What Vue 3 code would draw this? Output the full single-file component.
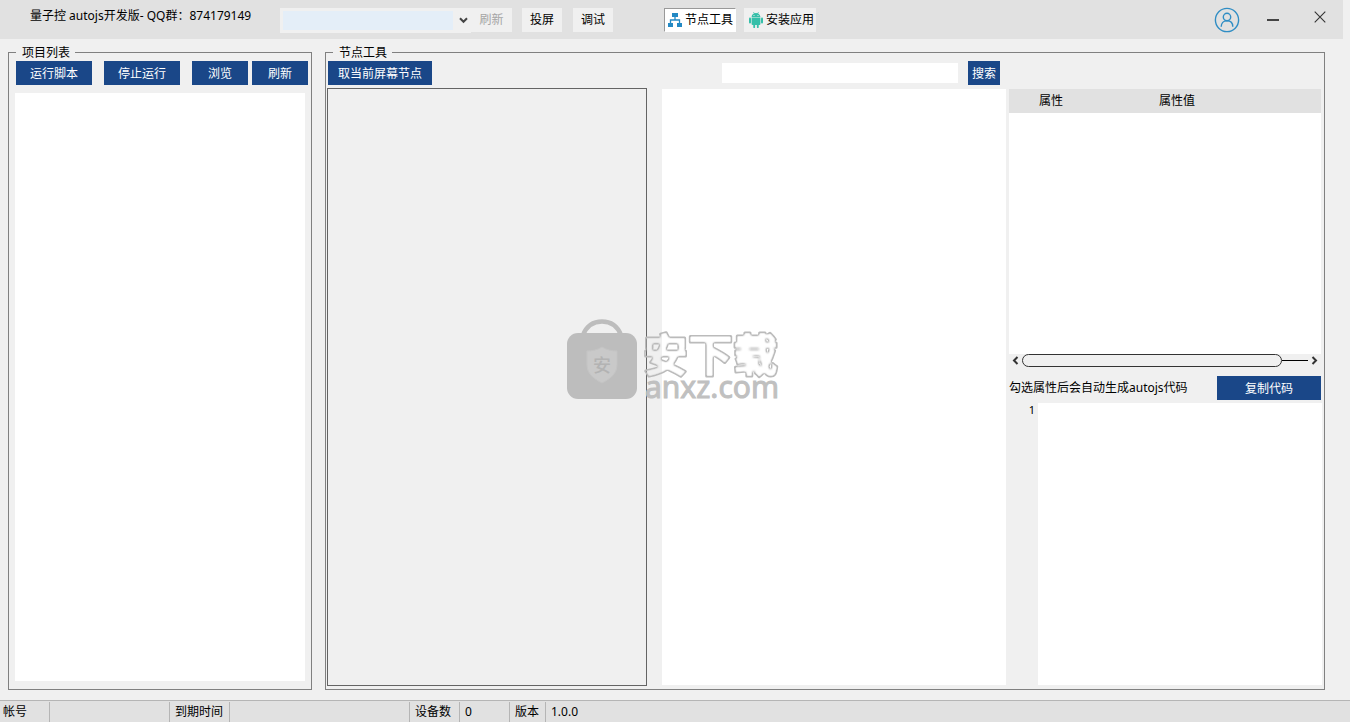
<script setup>
import { ref } from 'vue'

const device = ref('')
const keyword = ref('')
const code = ref('')
const projectActions = [
  { label: '运行脚本', size: 'wide' },
  { label: '停止运行', size: 'wide' },
  { label: '浏览', size: 'small' },
  { label: '刷新', size: 'small' },
]
const status = [
  { text: '帐号', cell: 'account-label' },
  { text: '', cell: 'account' },
  { text: '到期时间', cell: 'expiry-label' },
  { text: '', cell: 'expiry' },
  { text: '设备数', cell: 'devices-label' },
  { text: '0', cell: 'devices' },
  { text: '版本', cell: 'version-label' },
  { text: '1.0.0', cell: 'version' },
]
</script>

<template>
  <div class="window">
    <header class="titlebar">
      <h1 class="title">量子控 autojs开发版- QQ群：874179149</h1>
      <div class="device">
        <select v-model="device" class="device-select" aria-label="设备">
          <option value=""></option>
        </select>
        <svg class="chevron" width="9" height="7" viewBox="0 0 9 7"><path d="M1 1.2L4.5 4.8L8 1.2" fill="none" stroke="#444" stroke-width="2" /></svg>
        <button class="tool refresh" disabled>刷新</button>
      </div>
      <button class="tool cast">投屏</button>
      <button class="tool debug">调试</button>
      <button class="tool tab active">
        <svg width="16" height="16" viewBox="0 0 16 16">
          <path d="M5 1h6v4H5zM1 11h5v4H1zM10 11h5v4h-5z" fill="#2389c4" />
          <path d="M8 5v3M3.5 11V8h9v3" fill="none" stroke="#2389c4" stroke-width="1.3" />
        </svg>
        <span>节点工具</span>
      </button>
      <button class="tool tab">
        <svg width="16" height="16" viewBox="0 0 16 16">
          <g fill="#35bfa9">
            <path d="M3.6 5C3.8 3 5 2 6 1.6L5.2.4l.5-.3.9 1.2a5 5 0 0 1 2.8 0l.9-1.2.5.3L10 1.6c1.2.5 2.2 1.6 2.4 3.4z" />
            <path d="M3.6 5.6h8.8V12a1 1 0 0 1-1 1h-.7v2.2a.9.9 0 0 1-1.8 0V13H7.1v2.2a.9.9 0 0 1-1.8 0V13h-.7a1 1 0 0 1-1-1z" />
            <rect x="1" y="5.5" width="2" height="6" rx="1" />
            <rect x="13" y="5.5" width="2" height="6" rx="1" />
          </g>
          <circle cx="6" cy="3.5" r=".6" fill="#f0f0f0" />
          <circle cx="10" cy="3.5" r=".6" fill="#f0f0f0" />
        </svg>
        <span>安装应用</span>
      </button>
      <div class="controls">
        <button class="control user" aria-label="用户">
          <svg width="26" height="26" viewBox="0 0 26 26" fill="none" stroke="#2f8dc4" stroke-width="1.4">
            <circle cx="13" cy="13" r="11.6" />
            <circle cx="13" cy="10" r="3.7" />
            <path d="M7.2 19.8c0-3.7 2.3-6.1 5.8-6.1s5.8 2.4 5.8 6.1" />
          </svg>
        </button>
        <button class="control minimize" aria-label="最小化">
          <svg width="12" height="12" viewBox="0 0 12 12"><path d="M0 6h12" stroke="#444" stroke-width="2" /></svg>
        </button>
        <button class="control close" aria-label="关闭">
          <svg width="12" height="12" viewBox="0 0 12 12"><path d="M.7.7l10.6 10.6M11.3.7L.7 11.3" stroke="#333" stroke-width="1.1" /></svg>
        </button>
      </div>
    </header>

    <main class="workspace">
      <fieldset class="group projects">
        <legend>项目列表</legend>
        <div class="project-actions">
          <button v-for="a in projectActions" :key="a.label" class="primary" :class="a.size">{{ a.label }}</button>
        </div>
        <div class="project-list"></div>
      </fieldset>

      <fieldset class="group nodes">
        <legend>节点工具</legend>
        <section class="screen-column">
          <button class="primary capture">取当前屏幕节点</button>
          <div class="screen"></div>
        </section>
        <section class="tree-column">
          <form class="search" @submit.prevent>
            <input v-model="keyword" type="text" aria-label="搜索内容" />
            <button class="primary">搜索</button>
          </form>
          <div class="tree"></div>
        </section>
        <section class="detail-column">
          <div class="attributes">
            <table>
              <thead><tr><th class="name">属性</th><th>属性值</th></tr></thead>
            </table>
          </div>
          <div class="scrollbar">
            <svg width="7" height="9" viewBox="0 0 7 9"><path d="M5.5 1L2 4.5L5.5 8" fill="none" stroke="#333" stroke-width="2" /></svg>
            <div class="track"><div class="thumb"></div></div>
            <svg width="7" height="9" viewBox="0 0 7 9"><path d="M1.5 1L5 4.5L1.5 8" fill="none" stroke="#333" stroke-width="2" /></svg>
          </div>
          <div class="code-head">
            <label for="code">勾选属性后会自动生成autojs代码</label>
            <button class="primary copy">复制代码</button>
          </div>
          <div class="editor">
            <span class="gutter">1</span>
            <textarea id="code" v-model="code" spellcheck="false"></textarea>
          </div>
        </section>
      </fieldset>
    </main>

    <footer class="statusbar">
      <span v-for="s in status" :key="s.cell" :class="s.cell">{{ s.text }}</span>
    </footer>

    <div class="watermark">
      <svg class="bag" width="72" height="82" viewBox="0 0 72 82">
        <path d="M17 17C21 7 28 3.5 36 3.5s15 3.5 19 13.5" fill="none" stroke="#bdbdbd" stroke-width="4.5" />
        <rect x="1" y="15" width="70" height="66" rx="11" fill="#bdbdbd" />
        <path d="M36 29c5 3 10 4 15 4v14c0 9-7 14-15 18-8-4-15-9-15-18V33c5 0 10-1 15-4z" fill="#c9c9c9" stroke="#c4c4c4" />
        <text x="36" y="54" text-anchor="middle" class="seal">安</text>
      </svg>
      <div class="brand">
        <svg class="brand-name" width="142" height="48" viewBox="0 0 142 48">
          <defs>
            <filter id="outline" x="-6" y="-10" width="156" height="70" filterUnits="userSpaceOnUse" color-interpolation-filters="sRGB">
              <feGaussianBlur in="SourceAlpha" stdDeviation="1.1" />
              <feComponentTransfer result="inner">
                <feFuncA type="linear" slope="6" intercept="-5" />
              </feComponentTransfer>
              <feComposite in="SourceGraphic" in2="inner" operator="out" />
            </filter>
          </defs>
          <text x="1" y="41" filter="url(#outline)">安下载</text>
        </svg>
        <span class="brand-site">anxz.com</span>
      </div>
    </div>
  </div>
</template>

<style>
body { background: #f0f0f0; }
</style>

<style scoped>
* { box-sizing: border-box; }
.window {
  position: relative;
  display: flex;
  flex-direction: column;
  min-height: 100vh;
  background: #f0f0f0;
  color: #000;
  font: 12px/16px "Noto Sans", "Noto Sans CJK SC", sans-serif;
}
button, input, select, textarea { font: inherit; color: inherit; margin: 0; padding: 0; border: 0; border-radius: 0; outline: 0; }
svg { display: block; flex: none; }
.titlebar {
  display: flex;
  align-items: flex-start;
  height: 39px;
  margin-right: 7px;
  padding: 8px 17px 0 30px;
  background: #e1e1e1;
}
.title { width: 250px; margin: 0; font-size: 12px; font-weight: 400; white-space: nowrap; }
.device { position: relative; display: flex; align-items: flex-start; }
.device-select {
  width: 191px;
  height: 25px;
  appearance: none;
  border: 3px solid #f0f0f0;
  border-right-width: 18px;
  background: #e4eef8;
}
.chevron { position: absolute; left: 179px; top: 9px; pointer-events: none; }
.tool { width: 40px; height: 24px; background: #f0f0f0; white-space: nowrap; }
.refresh { width: 41px; color: #a5a5a5; }
.cast { margin-left: 10px; }
.debug { margin: 0 51px 0 11px; }
.tab { display: flex; align-items: center; gap: 2px; width: 72px; padding-left: 4px; margin-right: 8px; }
.tab.active { padding-left: 2px; background: #fff; border: 1px solid #fff; border-top-color: #999; border-left-color: #999; }
.controls { display: flex; margin-left: auto; }
.control { background: none; }
.user { margin: -1px 27px 0 0; }
.minimize { margin: 6px 35px 0 0; height: 12px; }
.close { margin-top: 3px; height: 12px; }

.workspace { display: flex; flex: 1; gap: 13px; padding: 5px 25px 10px 8px; }
.group { min-width: 0; margin: 0; border: 1px solid #808080; }
.group legend { height: 16px; padding: 0 5px 0 6px; line-height: 18px; }
.primary { height: 24px; padding-top: 2px; background: #1a4788; color: #fff; white-space: nowrap; }
.projects { display: flex; flex-direction: column; gap: 8px; width: 304px; padding: 1px 3px 8px 6px; }
.projects legend { margin-left: 1px; }
.project-actions { display: flex; gap: 12px; padding-left: 1px; }
.wide { width: 76px; }
.small { width: 56px; }
.small + .small { margin-left: -8px; }
.project-list { flex: 1; margin-right: 3px; background: #fff; }

.nodes { display: grid; grid-template-columns: 320px minmax(0, 1fr) 313px; flex: 1; padding: 1px 2px 3px 1px; }
.nodes legend { margin-left: 6px; }
.nodes section { display: flex; flex-direction: column; }
.capture { width: 104px; margin: 0 0 3px 1px; }
.screen { flex: 1; border: 1px solid #646464; }
.nodes .tree-column { gap: 4px; padding-bottom: 1px; margin: 0 3px 0 15px; }
.search { display: flex; align-items: center; gap: 10px; padding: 0 6px 0 60px; }
.search input { flex: 1; min-width: 0; height: 20px; background: #fff; }
.search .primary { width: 32px; }
.tree { flex: 1; background: #fff; }
.nodes .detail-column { padding: 28px 0 1px; }
.attributes { flex: 265 0 0; margin-right: 1px; background: #fff; }
table { width: 100%; border-collapse: collapse; table-layout: fixed; background: #e1e1e1; }
th { height: 24px; padding: 0 0 0 30px; font-weight: 400; text-align: left; }
th.name { width: 120px; }
.scrollbar { display: flex; align-items: center; gap: 3px; height: 13px; padding: 0 4px 0 3px; }
.track { display: flex; align-items: center; flex: 1; }
.track::after { content: ""; flex: 1; height: 1px; background: #000; }
.thumb { width: 91%; height: 13px; border: 1px solid #333; border-radius: 7px; }
.code-head { display: flex; justify-content: space-between; align-items: center; margin: 9px 1px 3px 0; }
.copy { width: 104px; }
.editor { display: flex; flex: 282 0 0; }
.gutter { width: 29px; padding-right: 3px; text-align: right; font-size: 11px; line-height: 14px; }
.editor textarea { flex: 1; min-width: 0; resize: none; background: #fff; }

.statusbar { display: flex; height: 22px; border-top: 1px solid #b5b5b5; background: #e1e1e1; }
.statusbar span { margin-top: 1px; padding: 2px 5px; border-right: 1px solid #b5b5b5; white-space: nowrap; }
.statusbar .account-label { width: 50px; padding-left: 3px; }
.account { width: 120px; }
.expiry-label { width: 60px; }
.expiry { width: 180px; }
.devices-label { width: 50px; }
.devices { width: 50px; }
.version-label { width: 36px; }
.statusbar .version { border: 0; }

.watermark { position: absolute; left: 566px; top: 318px; display: flex; pointer-events: none; }
.seal { font: 500 18px "Noto Sans CJK SC", sans-serif; fill: #b3b3b3; }
.brand { display: flex; flex-direction: column; margin-left: 4px; padding-top: 13px; color: #c0c0c0; }
.brand-name { overflow: visible; }
.brand-name text {
  font: 700 45px "Noto Sans CJK SC", sans-serif;
  fill: #bbb;
  stroke: #bbb;
  stroke-width: 3px;
  stroke-linejoin: round;
}
.brand-site { padding-left: 3px; font-size: 30px; line-height: 16px; -webkit-text-stroke: 1px #c0c0c0; }
</style>
